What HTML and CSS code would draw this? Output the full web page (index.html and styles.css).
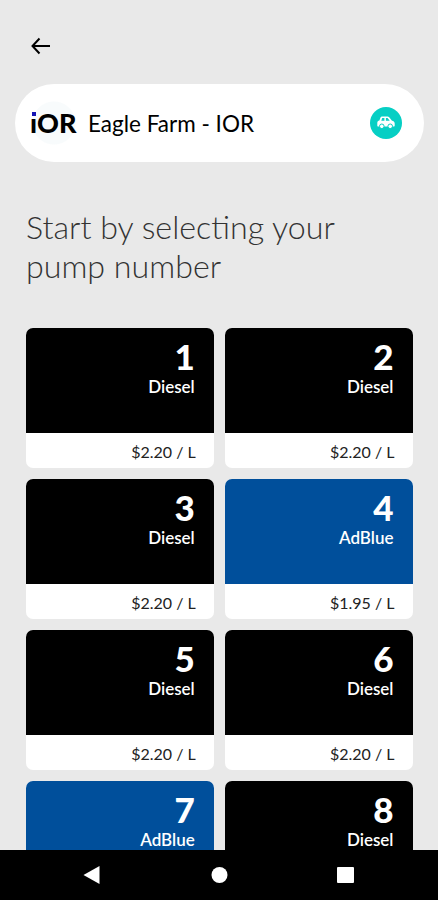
FILE: index.html
```html
<!DOCTYPE html>
<html lang="en">
<head>
    <meta charset="UTF-8">
    <meta name="viewport" content="width=device-width, initial-scale=1.0">
    <title>Select Pump</title>
    <link rel="stylesheet" href="styles.css">
</head>
<body>
    <div class="screen">
        <header class="top-bar">
            <svg class="back-icon" viewBox="0 0 20 18">
                <path d="M19 9H2M8.500 1.500L1.500 9l7 7.500" />
            </svg>
        </header>

        <!-- Selected site -->
        <div class="site">
            <div class="site-logo"><span class="logo-i">ı<span class="logo-dot"></span></span>OR</div>
            <span class="site-name">Eagle Farm - IOR</span>
            <div class="site-badge">
                <svg class="car-icon" viewBox="0 0 18 14">
                    <path class="car-body" d="M5 .5h5.500c.7 0 1.200.2 1.700.8L15 4.700c1.800.3 2.700 1.300 2.700 2.900v2c0 .7-.3 1-1 1H1.300c-.7 0-1-.3-1-1V7c0-1.300.8-2.200 2.100-2.400l1.100-3.100C3.800.8 4.300.5 5 .5z" />
                    <path class="car-window" d="M5.200 2h2.200v2.700H4.300zM8.900 2h1.700l2.100 2.700H8.900z" />
                    <circle class="car-wheel" cx="4.800" cy="10.300" r="2.300" />
                    <circle class="car-wheel" cx="13.200" cy="10.300" r="2.300" />
                </svg>
            </div>
        </div>

        <h1>Start by selecting your<br>pump number</h1>

        <!-- Pumps -->
        <div class="pumps">
            <div class="pump">
                <div class="pump-head"><span class="number">1</span><span class="fuel">Diesel</span></div>
                <div class="price">$2.20 / L</div>
            </div>
            <div class="pump">
                <div class="pump-head"><span class="number">2</span><span class="fuel">Diesel</span></div>
                <div class="price">$2.20 / L</div>
            </div>
            <div class="pump">
                <div class="pump-head"><span class="number">3</span><span class="fuel">Diesel</span></div>
                <div class="price">$2.20 / L</div>
            </div>
            <div class="pump">
                <div class="pump-head adblue"><span class="number">4</span><span class="fuel">AdBlue</span></div>
                <div class="price">$1.95 / L</div>
            </div>
            <div class="pump">
                <div class="pump-head"><span class="number">5</span><span class="fuel">Diesel</span></div>
                <div class="price">$2.20 / L</div>
            </div>
            <div class="pump">
                <div class="pump-head"><span class="number">6</span><span class="fuel">Diesel</span></div>
                <div class="price">$2.20 / L</div>
            </div>
            <div class="pump">
                <div class="pump-head adblue"><span class="number">7</span><span class="fuel">AdBlue</span></div>
            </div>
            <div class="pump">
                <div class="pump-head"><span class="number">8</span><span class="fuel">Diesel</span></div>
            </div>
        </div>
    </div>

    <!-- System navigation -->
    <nav class="nav-bar">
        <svg viewBox="0 0 20 20"><path d="M.500 10L16.500 1v18z" /></svg>
        <svg viewBox="0 0 20 20"><circle cx="10.500" cy="10" r="8" /></svg>
        <svg viewBox="0 0 20 20"><rect x="2" y="2" width="17" height="16" rx="1" /></svg>
    </nav>
</body>
</html>
```

FILE: styles.css
```css
* {
    box-sizing: border-box;
}

body {
    margin: 0;
    height: 900px;
    display: flex;
    flex-direction: column;
    overflow: hidden;
    background-color: #e9e9e9;
    color: #000;
    font-family: Lato, sans-serif;
}

.screen {
    height: 850px;
    overflow: hidden;
}

.top-bar {
    height: 84px;
    padding: 37px 0 0 31px;
}

.back-icon {
    display: block;
    width: 20px;
    height: 18px;
    fill: none;
    stroke: #000;
    stroke-width: 2;
}

.site {
    display: flex;
    align-items: center;
    height: 78px;
    margin: 0 14px 0 15px;
    padding: 0 22px 0 15px;
    border-radius: 39px;
    background-color: #fff;
}

.site-logo {
    width: 58px;
    height: 44px;
    background: radial-gradient(circle at 24px 22px, #f8fbfc 21px, #fff 22px);
    font-size: 27px;
    font-weight: 900;
    line-height: 43px;
}

.logo-i {
    position: relative;
}

.logo-dot {
    position: absolute;
    top: 6px;
    left: 2px;
    width: 4px;
    height: 4px;
    background-color: #1414b4;
}

.site-name {
    flex: 1;
    padding-top: 2px;
    font-size: 22.5px;
    line-height: 30px;
}

.site-badge {
    display: flex;
    align-items: center;
    justify-content: center;
    width: 32px;
    height: 32px;
    border-radius: 50%;
    background-color: #06cfc4;
}

.car-icon {
    width: 18px;
    height: 14px;
}

.car-body {
    fill: #fff;
}

.car-window {
    fill: #06cfc4;
}

.car-wheel {
    fill: #fff;
    stroke: #06cfc4;
    stroke-width: 1;
}

h1 {
    margin: 0;
    padding: 45px 26px 0;
    color: #333;
    font-size: 32.2px;
    font-weight: 300;
    line-height: 39px;
}

.pumps {
    display: grid;
    grid-template-columns: 1fr 1fr;
    gap: 11px;
    padding: 43px 25.5px 0 26px;
}

.pump {
    height: 140px;
    border-radius: 7px;
    overflow: hidden;
    background-color: #fff;
}

.pump-head {
    display: flex;
    flex-direction: column;
    align-items: flex-end;
    height: 105px;
    padding: 7px 19px 0 0;
    background-color: #000;
    color: #fff;
}

.adblue {
    background-color: #004f9b;
}

.number {
    font-size: 35px;
    font-weight: 900;
    line-height: 42px;
}

.fuel {
    font-size: 17px;
    font-weight: 600;
    line-height: 20px;
}

.price {
    padding-right: 18px;
    color: #222;
    font-size: 16px;
    line-height: 37px;
    text-align: right;
}

.nav-bar {
    display: flex;
    align-items: center;
    justify-content: center;
    gap: 106px;
    height: 50px;
    background-color: #000;
}

.nav-bar svg {
    width: 20px;
    height: 20px;
    fill: #fff;
}
```
